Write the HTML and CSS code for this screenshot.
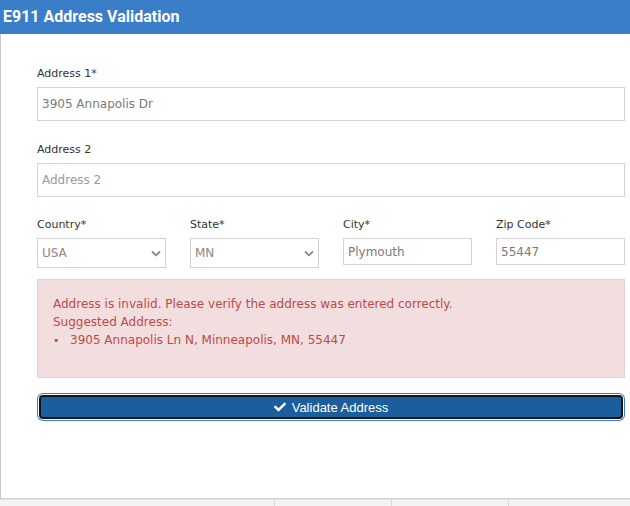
FILE: index.html
```html
<!DOCTYPE html>
<html lang="en">

<head>
    <meta charset="UTF-8">
    <meta name="viewport" content="width=device-width, initial-scale=1.0">
    <title>E911 Address Validation</title>
    <link rel="stylesheet" href="styles.css">
</head>

<body>
    <div class="titlebar">E911 Address Validation</div>

    <div class="panel">
        <div class="group">
            <label class="lbl">Address 1*</label>
            <input class="field big" type="text" value="3905 Annapolis Dr">
        </div>
        <div class="group">
            <label class="lbl">Address 2</label>
            <input class="field big" type="text" placeholder="Address 2">
        </div>

        <div class="row">
            <div class="col">
                <label class="lbl">Country*</label>
                <div class="sel">
                    <select class="field">
                        <option>USA</option>
                    </select>
                    <svg class="chev" width="10" height="7" viewBox="0 0 10 7">
                        <path d="M1 1.5 L5 5.3 L9 1.5" fill="none" stroke="#888" stroke-width="1.8" />
                    </svg>
                </div>
            </div>
            <div class="col">
                <label class="lbl">State*</label>
                <div class="sel">
                    <select class="field">
                        <option>MN</option>
                    </select>
                    <svg class="chev" width="10" height="7" viewBox="0 0 10 7">
                        <path d="M1 1.5 L5 5.3 L9 1.5" fill="none" stroke="#888" stroke-width="1.8" />
                    </svg>
                </div>
            </div>
            <div class="col">
                <label class="lbl">City*</label>
                <input class="field small" type="text" value="Plymouth">
            </div>
            <div class="col">
                <label class="lbl">Zip Code*</label>
                <input class="field small" type="text" value="55447">
            </div>
        </div>

        <div class="alert">
            <div>Address is invalid. Please verify the address was entered correctly.</div>
            <div>Suggested Address:</div>
            <ul>
                <li>3905 Annapolis Ln N, Minneapolis, MN, 55447</li>
            </ul>
        </div>

        <button class="validate" type="button">
            <svg width="12" height="12" viewBox="0 0 512 512">
                <path fill="#fff" d="M173.898 439.404l-166.4-166.4c-9.997-9.997-9.997-26.206 0-36.204l36.203-36.204c9.997-9.998 26.207-9.998 36.204 0L192 312.69 432.095 72.596c9.997-9.997 26.207-9.997 36.204 0l36.203 36.204c9.997 9.997 9.997 26.206 0 36.204l-294.4 294.401c-9.998 9.997-26.207 9.997-36.204-.001z" />
            </svg>
            Validate Address
        </button>
    </div>

    <div class="strip">
        <div class="cell first"></div>
        <div class="cell"></div>
        <div class="cell"></div>
        <div class="cell last"></div>
    </div>
</body>

</html>
```

FILE: styles.css
```css
body,
ul,
li {
    margin: 0;
    padding: 0;
    list-style: none;
}

body {
    width: 630px;
    height: 506px;
    overflow: hidden;
    background: #fff;
    font-family: "DejaVu Sans", Verdana, sans-serif;
    color: #333;
}

.titlebar {
    height: 34px;
    line-height: 34px;
    background-color: #3a7dc8;
    color: #fff;
    font-family: Roboto, "Liberation Sans", sans-serif;
    font-weight: bold;
    font-size: 16px;
    padding-left: 3px;
}

.panel {
    height: 432px;
    padding: 32px 5px 0 36px;
    border-left: 1px solid #c8c8c8;
    border-bottom: 1px solid #d0d0d0;
}

.group {
    margin-bottom: 21px;
}

.lbl {
    display: block;
    font-size: 11px;
    line-height: 15px;
    margin-bottom: 6px;
    color: #333;
}

.field {
    display: block;
    box-sizing: border-box;
    width: 100%;
    border: 1px solid #d2d2d2;
    background: #fff;
    font-family: "DejaVu Sans", Verdana, sans-serif;
    font-size: 12px;
    color: #7a7a7a;
    padding: 0 4px;
    margin: 0;
    outline: none;
    border-radius: 0;
}

.field::placeholder {
    color: #9a9a9a;
}

.big {
    height: 34px;
}

.small {
    height: 27px;
}

.row {
    display: grid;
    grid-template-columns: repeat(4, 129px);
    column-gap: 24px;
    margin-top: -1px;
}

.sel {
    position: relative;
}

.sel select {
    height: 30px;
    -webkit-appearance: none;
    appearance: none;
    color: #888;
}

.chev {
    position: absolute;
    right: 5px;
    top: 12px;
}

.alert {
    margin-top: 11px;
    background-color: #f2dede;
    border: 1px solid #ebd0d3;
    color: #bd4a48;
    font-size: 12px;
    line-height: 18px;
    padding: 15px 15px 27px 15px;
}

.alert li::before {
    content: "\2022";
    display: inline-block;
    width: 17px;
    font-size: 11px;
}

.validate {
    display: flex;
    align-items: center;
    justify-content: center;
    gap: 6px;
    box-sizing: border-box;
    width: 584px;
    height: 24px;
    margin: 17px 0 0 2px;
    background-color: #1c5d9e;
    border: 2px solid #151515;
    border-radius: 4px;
    box-shadow: 0 0 0 1px #fff, 0 0 0 2px #3a7dc8;
    color: #fff;
    font-family: "Liberation Sans", Arial, sans-serif;
    font-size: 13px;
    padding: 0;
    cursor: pointer;
}

.strip {
    display: flex;
    height: 8px;
    background: #f3f3f3;
    border-top: 1px solid #e2e2e2;
}

.cell {
    width: 116px;
    border-left: 1px solid #d8d8d8;
}

.cell.first {
    width: 274px;
    border-left: none;
}

.cell.last {
    flex: 1;
}
```
